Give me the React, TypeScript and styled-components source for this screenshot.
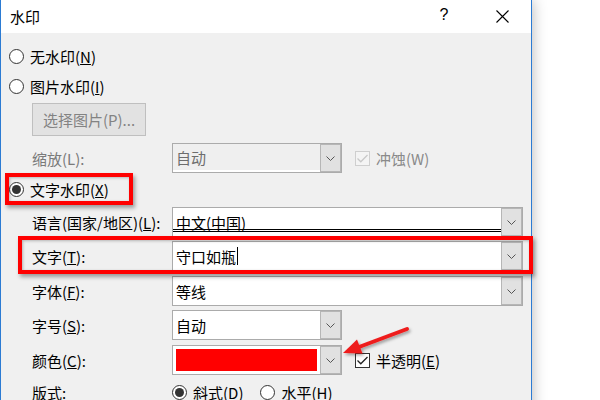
import React from 'react';
import styled, { createGlobalStyle } from 'styled-components';

const Global = createGlobalStyle`
  html, body { margin: 0; padding: 0; background: #fff; overflow: hidden; }
  body { font-family: "Noto Sans CJK SC", "Noto Sans", sans-serif; }
  #root { width: 600px; height: 400px; }
`;

const Page = styled.div`
  position: relative;
  width: 600px;
  height: 400px;
  overflow: hidden;
  background: #fff;
`;

const Dialog = styled.div`
  width: 532px;
  height: 430px;
  box-sizing: border-box;
  border-left: 1px solid #2b7bd3;
  border-right: 1px solid #2b7bd3;
  background: #f0f0f0;
  box-shadow: 0 0 14px rgba(0, 0, 0, 0.3);
  display: flex;
  flex-direction: column;
  font-size: 15px;
  color: #000;
`;

const TitleBar = styled.div`
  height: 33px;
  flex: none;
  background: #fff;
  display: flex;
  align-items: center;
  padding-left: 9px;
`;

const Title = styled.span`
  font-size: 15px;
  margin-top: -1px;
`;

const TitleButton = styled.div<{ $push?: boolean }>`
  width: 58px;
  height: 33px;
  display: flex;
  align-items: center;
  justify-content: center;
  margin-left: ${(p) => (p.$push ? 'auto' : '0')};
  font-size: 16px;
  font-family: "Liberation Sans", sans-serif;
  margin-top: -4px;
`;

const Body = styled.div`
  display: flex;
  flex-direction: column;
  padding-top: 8px;
`;

const RadioRow = styled.div<{ $h?: number; $mt?: number }>`
  height: ${(p) => p.$h ?? 30}px;
  margin-top: ${(p) => p.$mt ?? 0}px;
  display: flex;
  align-items: center;
  padding-left: 8px;
  gap: 6px;
`;

const RadioCircle = styled.span<{ $checked?: boolean }>`
  width: 15px;
  height: 15px;
  box-sizing: border-box;
  border: 1px solid #333;
  border-radius: 50%;
  background: #fff;
  display: inline-flex;
  align-items: center;
  justify-content: center;
  flex: none;
  &::after {
    content: '';
    display: ${(p) => (p.$checked ? 'block' : 'none')};
    width: 9px;
    height: 9px;
    border-radius: 50%;
    background: #333;
  }
`;

const Option = styled.span`
  display: inline-flex;
  align-items: center;
  gap: 6px;
`;

const Push = styled.button`
  margin-top: 2px;
  margin-left: 31px;
  width: 114px;
  height: 33px;
  box-sizing: border-box;
  border: 1px solid #bfbfbf;
  background: #e2e2e2;
  color: #838383;
  font-family: inherit;
  font-size: 15px;
  padding: 0;
`;

const FormRow = styled.div<{ $mt?: number; $h?: number }>`
  height: ${(p) => p.$h ?? 30}px;
  margin-top: ${(p) => p.$mt ?? 0}px;
  display: flex;
  align-items: center;
  padding-left: 31px;
`;

const Label = styled.span<{ $disabled?: boolean }>`
  width: 140px;
  flex: none;
  color: ${(p) => (p.$disabled ? '#7a7a7a' : '#000')};
`;

const Combo = styled.div<{ $w: number; $disabled?: boolean }>`
  width: ${(p) => p.$w}px;
  height: 30px;
  box-sizing: border-box;
  border: 1px solid #ababab;
  background: ${(p) => (p.$disabled ? '#efefef' : '#fff')};
  display: flex;
  flex: none;
`;

const Field = styled.div<{ $disabled?: boolean; $double?: boolean }>`
  flex: 1;
  position: relative;
  display: flex;
  align-items: center;
  padding-left: 3px;
  color: ${(p) => (p.$disabled ? '#6d6d6d' : '#000')};
  border-bottom: ${(p) => (p.$disabled ? '2px solid #fff' : 'none')};
  &::after {
    content: '';
    display: ${(p) => (p.$double ? 'block' : 'none')};
    position: absolute;
    left: 0;
    right: 0;
    bottom: 4px;
    height: 1px;
    border-top: 1px solid #000;
    border-bottom: 1px solid #000;
  }
`;

const Caret = styled.span`
  display: inline-block;
  width: 1px;
  height: 18px;
  background: #000;
  margin-left: 1px;
`;

const Swatch = styled.div`
  flex: 1;
  margin: 3px;
  background: #ff0000;
`;

const DropBtn = styled.div`
  width: 21px;
  box-sizing: border-box;
  border: 1px solid #b6b6b6;
  background: #e1e1e1;
  display: flex;
  align-items: center;
  justify-content: center;
  flex: none;
`;

const CheckBox = styled.span<{ $disabled?: boolean }>`
  width: 15px;
  height: 15px;
  box-sizing: border-box;
  border: 1px solid ${(p) => (p.$disabled ? '#cfcfcf' : '#333')};
  background: ${(p) => (p.$disabled ? '#f4f4f4' : '#fff')};
  display: inline-flex;
  align-items: center;
  justify-content: center;
  flex: none;
`;

const CheckItem = styled.span<{ $disabled?: boolean }>`
  display: inline-flex;
  align-items: center;
  gap: 6px;
  margin-left: 13px;
  color: ${(p) => (p.$disabled ? '#8a8a8a' : '#000')};
`;

const Options = styled.span`
  display: inline-flex;
  align-items: center;
  gap: 17px;
`;

const RedFrame = styled.div<{ $x: number; $y: number; $w: number; $h: number }>`
  position: absolute;
  left: ${(p) => p.$x}px;
  top: ${(p) => p.$y}px;
  width: ${(p) => p.$w}px;
  height: ${(p) => p.$h}px;
  box-sizing: border-box;
  border: 4px solid #ff0000;
  box-shadow: 2px 3px 4px rgba(0, 0, 0, 0.35), inset 1px 1px 3px rgba(0, 0, 0, 0.25);
  pointer-events: none;
`;

const Overlay = styled.svg`
  position: absolute;
  left: 0;
  top: 0;
  pointer-events: none;
`;

const Chevron = () => (
  <svg width="9" height="5" viewBox="0 0 9 5">
    <path d="M0.5 0.5 L4.5 4.5 L8.5 0.5" fill="none" stroke="#555" strokeWidth="1" />
  </svg>
);

const Tick = ({ color }: { color: string }) => (
  <svg width="11" height="9" viewBox="0 0 11 9">
    <path d="M0.5 4.5 L3.8 7.8 L10.5 1" fill="none" stroke={color} strokeWidth="1.3" />
  </svg>
);

export default function App() {
  return (
    <>
      <Global />
      <Page>
        <Dialog>
          <TitleBar>
            <Title>水印</Title>
            <TitleButton $push>?</TitleButton>
            <TitleButton>
              <svg width="13" height="13" viewBox="0 0 13 13" style={{ marginTop: 4 }}>
                <path d="M0.5 0.5 L12.5 12.5 M12.5 0.5 L0.5 12.5" stroke="#000" strokeWidth="1.1" />
              </svg>
            </TitleButton>
          </TitleBar>
          <Body>
            <RadioRow>
              <RadioCircle />
              <span>无水印(<u>N</u>)</span>
            </RadioRow>
            <RadioRow>
              <RadioCircle />
              <span>图片水印(<u>I</u>)</span>
            </RadioRow>
            <Push disabled>选择图片(P)...</Push>
            <FormRow $mt={7}>
              <Label $disabled>缩放(L):</Label>
              <Combo $w={170} $disabled>
                <Field $disabled>自动</Field>
                <DropBtn><Chevron /></DropBtn>
              </Combo>
              <CheckItem $disabled>
                <CheckBox $disabled><Tick color="#c8c8c8" /></CheckBox>
                <span>冲蚀(W)</span>
              </CheckItem>
            </FormRow>
            <RadioRow $h={32}>
              <RadioCircle $checked />
              <span>文字水印(<u>X</u>)</span>
            </RadioRow>
            <FormRow $mt={2}>
              <Label>语言(国家/地区)(<u>L</u>):</Label>
              <Combo $w={351}>
                <Field $double>中文(中国)</Field>
                <DropBtn><Chevron /></DropBtn>
              </Combo>
            </FormRow>
            <FormRow $mt={4}>
              <Label>文字(<u>T</u>):</Label>
              <Combo $w={351}>
                <Field>守口如瓶<Caret /></Field>
                <DropBtn><Chevron /></DropBtn>
              </Combo>
            </FormRow>
            <FormRow $mt={5}>
              <Label>字体(<u>F</u>):</Label>
              <Combo $w={351}>
                <Field>等线</Field>
                <DropBtn><Chevron /></DropBtn>
              </Combo>
            </FormRow>
            <FormRow $mt={4}>
              <Label>字号(<u>S</u>):</Label>
              <Combo $w={170}>
                <Field>自动</Field>
                <DropBtn><Chevron /></DropBtn>
              </Combo>
            </FormRow>
            <FormRow $mt={5}>
              <Label>颜色(<u>C</u>):</Label>
              <Combo $w={170}>
                <Swatch />
                <DropBtn><Chevron /></DropBtn>
              </Combo>
              <CheckItem>
                <CheckBox><Tick color="#222" /></CheckBox>
                <span>半透明(<u>E</u>)</span>
              </CheckItem>
            </FormRow>
            <FormRow $mt={4} $h={26}>
              <Label>版式:</Label>
              <Options>
                <Option>
                  <RadioCircle $checked />
                  <span>斜式(D)</span>
                </Option>
                <Option>
                  <RadioCircle />
                  <span>水平(H)</span>
                </Option>
              </Options>
            </FormRow>
          </Body>
        </Dialog>
        <RedFrame $x={5} $y={173} $w={128} $h={32} />
        <RedFrame $x={18} $y={236} $w={515} $h={38} />
        <Overlay width="600" height="400" viewBox="0 0 600 400">
          <defs>
            <filter id="sh" x="-20%" y="-50%" width="140%" height="200%">
              <feDropShadow dx="1.5" dy="2" stdDeviation="1.5" floodColor="#000" floodOpacity="0.35" />
            </filter>
          </defs>
          <g filter="url(#sh)">
            <path d="M407 329 L359 347" stroke="#ee1c1c" strokeWidth="4" strokeLinecap="round" />
            <polygon points="343,353 362.5,353.5 357,339.5" fill="#ee1c1c" />
          </g>
        </Overlay>
      </Page>
    </>
  );
}
